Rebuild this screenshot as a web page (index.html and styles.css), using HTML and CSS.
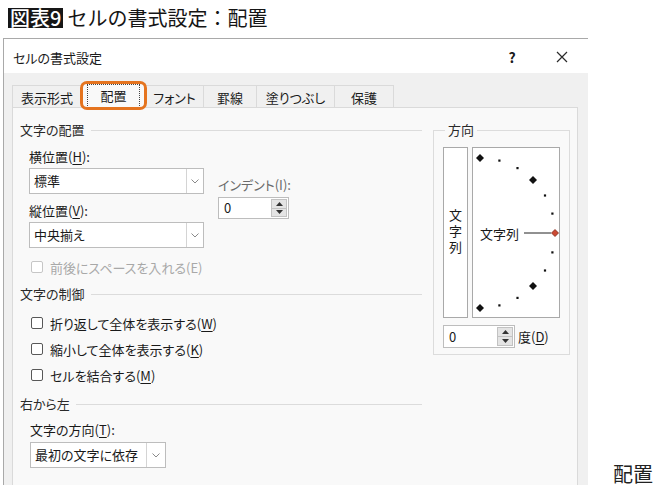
FILE: index.html
```html
<!DOCTYPE html>
<html lang="ja">

<head>
    <meta charset="UTF-8">
    <meta name="viewport" content="width=device-width, initial-scale=1.0">
    <title>セルの書式設定：配置</title>
    <link rel="stylesheet" href="styles.css">
</head>

<body>
    <h1 class="fig-title"><span class="fig-no">図表9</span>セルの書式設定：配置</h1>

    <div class="stage">
        <div class="dialog">
            <!-- タイトルバー -->
            <div class="titlebar">
                <span class="titlebar-text">セルの書式設定</span>
                <span class="help">?</span>
                <span class="close">
                    <svg width="12" height="12" viewBox="0 0 12 12">
                        <path d="M1 1L11 11M11 1L1 11" stroke="#2a2a2a" stroke-width="1.2" fill="none" />
                    </svg>
                </span>
            </div>

            <div class="dialog-body">
                <!-- タブ -->
                <div class="tabs">
                    <div class="tab">表示形式</div>
                    <div class="tab active"><span class="focus">配置</span></div>
                    <div class="tab">フォント</div>
                    <div class="tab">罫線</div>
                    <div class="tab">塗りつぶし</div>
                    <div class="tab">保護</div>
                </div>

                <div class="panel">
                    <div class="col-main">
                        <div class="group-head">文字の配置</div>

                        <div class="align-row">
                            <div class="align-fields">
                                <div class="field-label">横位置(<u>H</u>):</div>
                                <div class="combo">
                                    <span class="combo-value">標準</span>
                                    <span class="combo-arrow">
                                        <svg width="8" height="5" viewBox="0 0 8 5">
                                            <polyline points="0.5,0.5 4,4 7.5,0.5" fill="none" stroke="#8a8a8a" />
                                        </svg>
                                    </span>
                                </div>
                                <div class="field-label label-v">縦位置(<u>V</u>):</div>
                                <div class="combo">
                                    <span class="combo-value">中央揃え</span>
                                    <span class="combo-arrow">
                                        <svg width="8" height="5" viewBox="0 0 8 5">
                                            <polyline points="0.5,0.5 4,4 7.5,0.5" fill="none" stroke="#8a8a8a" />
                                        </svg>
                                    </span>
                                </div>
                            </div>

                            <div class="indent-field">
                                <div class="field-label muted">インデント(I):</div>
                                <div class="spin">
                                    <span class="spin-value">0</span>
                                    <span class="spin-btns">
                                        <span class="spin-btn"><svg width="7" height="4" viewBox="0 0 7 4"><path d="M0 4L3.5 0L7 4z" fill="#333" /></svg></span>
                                        <span class="spin-btn"><svg width="7" height="4" viewBox="0 0 7 4"><path d="M0 0L3.5 4L7 0z" fill="#333" /></svg></span>
                                    </span>
                                </div>
                            </div>
                        </div>

                        <div class="check disabled"><span class="box"></span>前後にスペースを入れる(E)</div>

                        <div class="group-head head-gap">文字の制御</div>
                        <div class="checks">
                            <div class="check"><span class="box"></span>折り返して全体を表示する(<u>W</u>)</div>
                            <div class="check"><span class="box"></span>縮小して全体を表示する(<u>K</u>)</div>
                            <div class="check"><span class="box"></span>セルを結合する(<u>M</u>)</div>
                        </div>

                        <div class="group-head head-rtl">右から左</div>
                        <div class="field-label dir-label">文字の方向(<u>T</u>):</div>
                        <div class="combo dir">
                            <span class="combo-value">最初の文字に依存</span>
                            <span class="combo-arrow">
                                <svg width="8" height="5" viewBox="0 0 8 5">
                                    <polyline points="0.5,0.5 4,4 7.5,0.5" fill="none" stroke="#8a8a8a" />
                                </svg>
                            </span>
                        </div>
                    </div>

                    <!-- 方向 -->
                    <fieldset class="orient">
                        <legend>方向</legend>
                        <div class="orient-boxes">
                            <div class="vertical-box"><span>文字列</span></div>
                            <div class="dial">
                                <svg width="86" height="169" viewBox="0 0 86 169">
                                    <g fill="#111">
                                        <path d="M7 6l4 4-4 4-4-4z" />
                                        <path d="M60 28l4 4-4 4-4-4z" />
                                        <path d="M60 134l4 4-4 4-4-4z" />
                                        <path d="M7 156l4 4-4 4-4-4z" />
                                        <rect x="25.3" y="11.5" width="2.2" height="2.2" />
                                        <rect x="43.4" y="19" width="2.2" height="2.2" />
                                        <rect x="70.9" y="46.4" width="2.2" height="2.2" />
                                        <rect x="78.3" y="64.5" width="2.2" height="2.2" />
                                        <rect x="78.3" y="103.3" width="2.2" height="2.2" />
                                        <rect x="70.9" y="121.4" width="2.2" height="2.2" />
                                        <rect x="43.4" y="148.8" width="2.2" height="2.2" />
                                        <rect x="25.3" y="156.3" width="2.2" height="2.2" />
                                    </g>
                                    <text x="7" y="85" dominant-baseline="central" font-size="13" fill="#1a1a1a">文字列</text>
                                    <line x1="51" y1="85" x2="78" y2="85" stroke="#222" stroke-width="1" />
                                    <path d="M82 81.5l3.5 3.5-3.5 3.5-3.5-3.5z" fill="#cc4a33" stroke="#7d2414" stroke-width="0.8" />
                                </svg>
                            </div>
                        </div>
                        <div class="degree-row">
                            <div class="spin deg">
                                <span class="spin-value">0</span>
                                <span class="spin-btns">
                                    <span class="spin-btn"><svg width="7" height="4" viewBox="0 0 7 4"><path d="M0 4L3.5 0L7 4z" fill="#333" /></svg></span>
                                    <span class="spin-btn"><svg width="7" height="4" viewBox="0 0 7 4"><path d="M0 0L3.5 4L7 0z" fill="#333" /></svg></span>
                                </span>
                            </div>
                            <span class="deg-label">度(<u>D</u>)</span>
                        </div>
                    </fieldset>
                </div>
            </div>
        </div>

        <div class="caption">配置</div>
    </div>
</body>

</html>
```

FILE: styles.css
```css
* {
    margin: 0;
    padding: 0;
    box-sizing: border-box;
}

body {
    font-family: "Noto Sans CJK JP", "Noto Sans", sans-serif;
    font-feature-settings: "palt";
    color: #1a1a1a;
    background: #fff;
    width: 670px;
    height: 495px;
    overflow: hidden;
}

u {
    text-underline-offset: 2px;
}

/* 図表タイトル */
.fig-title {
    height: 38px;
    padding: 6px 0 0 8px;
    font-size: 20px;
    font-weight: 400;
    line-height: 24px;
    font-feature-settings: normal;
    color: #151515;
}

.fig-no {
    display: inline-block;
    vertical-align: top;
    margin-top: 2px;
    margin-right: 4px;
    height: 20px;
    padding: 0 2px;
    line-height: 20px;
    background: #161616;
    color: #fff;
    font-weight: 500;
}

.stage {
    display: flex;
    align-items: flex-end;
}

/* ダイアログ */
.dialog {
    width: 585px;
    height: 447px;
    margin-left: 3px;
    border-top: 1px solid #a9a9a9;
    border-left: 1px solid #a9a9a9;
    display: flex;
    flex-direction: column;
}

.titlebar {
    height: 34px;
    background: #fff;
    display: flex;
    align-items: center;
    padding: 2px 12px 0 9px;
    font-size: 13px;
}

.titlebar-text {
    flex: 1;
}

.help {
    width: 24px;
    margin-right: 24px;
    text-align: center;
    font-size: 14px;
    font-weight: 700;
}

.close {
    width: 28px;
    display: flex;
    justify-content: center;
}

.dialog-body {
    flex: 1;
    background: #f0f0f0;
    padding: 10px 10px 0 8px;
    display: flex;
    flex-direction: column;
}

/* タブ */
.tabs {
    display: grid;
    grid-template-columns: 70px 64px 58px 53px 78px 59px;
    justify-content: start;
    align-items: end;
}

.tab {
    height: 22px;
    padding-top: 2px;
    text-align: center;
    font-size: 13px;
    line-height: 19px;
    background: #f0f0f0;
    border-top: 1px solid #dadada;
    border-right: 1px solid #dadada;
}

.tab:first-child {
    border-left: 1px solid #dadada;
}

.tab.active {
    position: relative;
    z-index: 1;
    height: 25px;
    margin-bottom: -1px;
    margin-left: -1px;
    padding-top: 0;
    background: #f9f9f9;
    border-left: 1px solid #dadada;
    display: flex;
    align-items: center;
    justify-content: center;
}

.tab.active::after {
    content: "";
    position: absolute;
    left: -2px;
    right: -2px;
    top: -3px;
    bottom: -2px;
    border: 3px solid #e5741f;
    border-radius: 7px;
}

.focus {
    padding: 2px 12px;
    line-height: 18px;
    outline: 1px dotted #444;
}

/* タブの中身 */
.panel {
    flex: 1;
    background: #f9f9f9;
    border: 1px solid #dadada;
    border-bottom: 0;
    display: flex;
    gap: 11px;
    padding: 13px 7px 0 7px;
}

.col-main {
    width: 402px;
    font-size: 13px;
}

.group-head {
    display: flex;
    align-items: center;
    line-height: 18px;
    color: #2a2a2a;
}

.group-head::after {
    content: "";
    flex: 1;
    border-top: 1px solid #dcdcdc;
    margin-left: 6px;
}

.head-gap {
    margin-top: 9px;
}

.head-rtl {
    margin-top: 7px;
}

.align-row {
    display: flex;
    margin-top: 9px;
    padding-left: 9px;
}

.align-fields {
    width: 175px;
}

.field-label {
    line-height: 18px;
}

.field-label.muted {
    color: #6a6a6a;
}

.label-v {
    margin-top: 8px;
}

.combo {
    display: flex;
    height: 26px;
    margin-top: 2px;
    background: #fff;
    border: 1px solid #bdbdbd;
}

.combo-value {
    flex: 1;
    padding-left: 4px;
    line-height: 24px;
}

.combo-arrow {
    width: 17px;
    border-left: 1px solid #d4d4d4;
    display: flex;
    align-items: center;
    justify-content: center;
}

.combo.dir {
    width: 136px;
    margin: 3px 0 0 10px;
}

.combo.dir .combo-arrow {
    width: 19px;
}

.dir-label {
    margin-top: 8px;
    padding-left: 10px;
}

.indent-field {
    margin-left: 14px;
    padding-top: 28px;
}

/* スピンボックス */
.spin {
    display: flex;
    width: 71px;
    height: 22px;
    margin-top: 3px;
    background: #fff;
    border: 1px solid #bdbdbd;
}

.spin-value {
    flex: 1;
    padding-left: 5px;
    line-height: 20px;
}

.spin-btns {
    width: 18px;
    padding: 1px;
    display: flex;
    flex-direction: column;
}

.spin-btn {
    flex: 1;
    background: #e4e4e4;
    border: 1px solid #c2c2c2;
    display: flex;
    align-items: center;
    justify-content: center;
}

.spin-btn + .spin-btn {
    border-top: 0;
}

/* チェックボックス */
.check {
    display: flex;
    align-items: center;
    height: 26px;
    padding-left: 11px;
}

.box {
    width: 12px;
    height: 12px;
    margin-right: 7px;
    background: #fff;
    border: 1px solid #585858;
    border-radius: 2px;
}

.check.disabled {
    height: 18px;
    margin-top: 10px;
    color: #a8a8a8;
}

.check.disabled .box {
    border-color: #c6c6c6;
}

.checks {
    margin-top: 7px;
}

/* 方向 */
.orient {
    width: 137px;
    min-width: 0;
    align-self: flex-start;
    border: 1px solid #dcdcdc;
    padding: 8px 9px 6px;
    font-size: 13px;
}

.orient legend {
    margin-left: 2px;
    padding: 0 3px;
    line-height: 18px;
    color: #2a2a2a;
}

.orient-boxes {
    display: flex;
    gap: 4px;
    height: 171px;
}

.vertical-box {
    width: 25px;
    background: #fff;
    border: 1px solid #a9a9a9;
    display: flex;
    align-items: center;
    justify-content: center;
}

.vertical-box span {
    writing-mode: vertical-rl;
    text-orientation: upright;
    letter-spacing: 3px;
    font-feature-settings: normal;
}

.dial {
    flex: 1;
    background: #fff;
    border: 1px solid #a9a9a9;
}

.dial svg {
    display: block;
}

.degree-row {
    display: flex;
    align-items: center;
    margin-top: 7px;
}

.spin.deg {
    width: 72px;
    height: 23px;
    margin-top: 0;
}

.spin.deg .spin-value {
    line-height: 21px;
}

.deg-label {
    margin-left: 3px;
}

.caption {
    margin-left: 25px;
    font-size: 20px;
    line-height: 22px;
    font-feature-settings: normal;
    color: #222;
}
```
